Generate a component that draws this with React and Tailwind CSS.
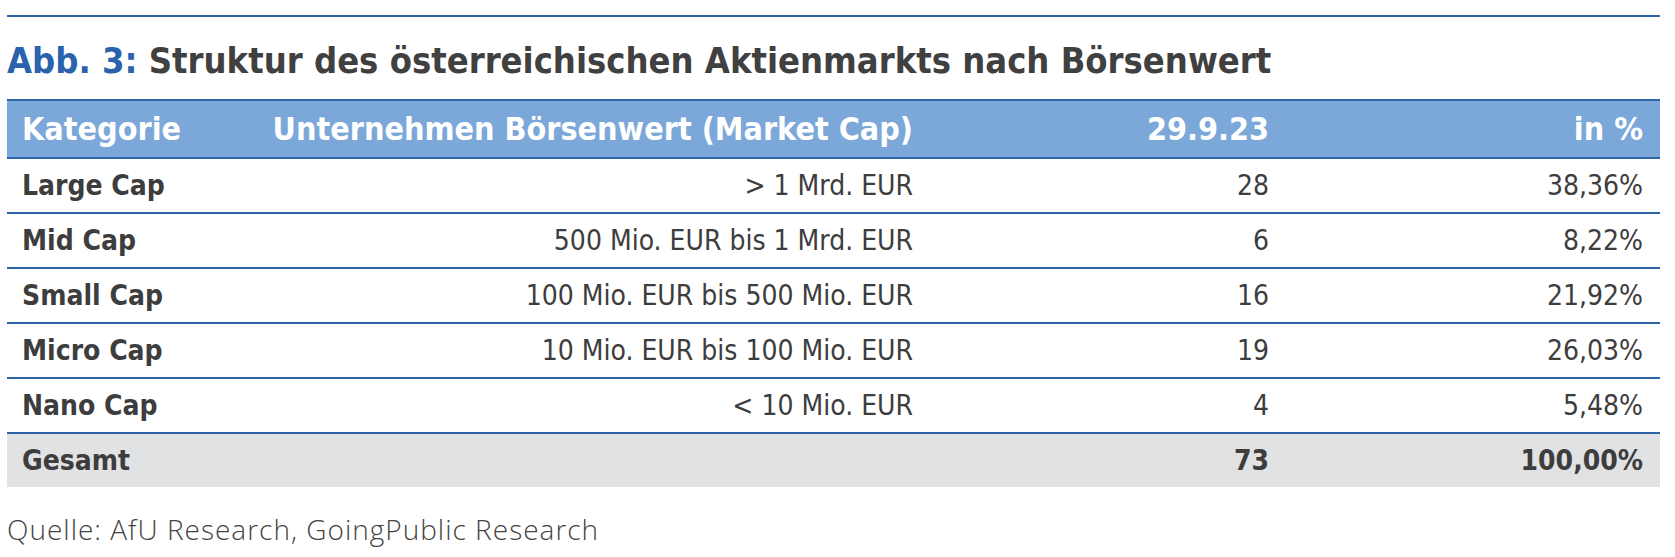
import React from "react";

const rows = [
  { cat: "Large Cap", range: "> 1 Mrd. EUR", count: "28", pct: "38,36%" },
  { cat: "Mid Cap", range: "500 Mio. EUR bis 1 Mrd. EUR", count: "6", pct: "8,22%" },
  { cat: "Small Cap", range: "100 Mio. EUR bis 500 Mio. EUR", count: "16", pct: "21,92%" },
  { cat: "Micro Cap", range: "10 Mio. EUR bis 100 Mio. EUR", count: "19", pct: "26,03%" },
  { cat: "Nano Cap", range: "< 10 Mio. EUR", count: "4", pct: "5,48%" },
];

const cond = { fontFamily: '"Liberation Sans Narrow", "DejaVu Sans Condensed", "Open Sans", sans-serif' };

export default function App() {
  return (
    <div className="w-[1675px] h-[557px] bg-white pl-[7px] pr-[15px] pt-[15px] text-[#3d3d3d]" style={cond}>
      <div className="h-[2px] bg-[#2d64a6]" />

      <h1 className="mt-[22px] h-[60px] text-[36px] font-bold leading-[44px] text-[#404040] font-stretch-condensed">
        <span className="text-[#2a62ab]">Abb. 3:</span> Struktur des österreichischen Aktienmarkts nach Börsenwert
      </h1>

      {/* table */}
      <div className="w-[1653px] font-stretch-condensed">
        <div className="grid h-[60px] grid-cols-[240px_683px_356px_374px] items-center border-y-2 border-[#2d64a6] bg-[#7ba7d9] text-[32px] font-bold text-white">
          <div className="pl-[15px]">Kategorie</div>
          <div className="pr-[17px] text-right">Unternehmen Börsenwert (Market Cap)</div>
          <div className="pr-[17px] text-right">29.9.23</div>
          <div className="pr-[17px] text-right">in %</div>
        </div>

        {rows.map((r) => (
          <div key={r.cat} className="grid h-[55px] grid-cols-[240px_683px_356px_374px] items-center border-b-2 border-[#2d64a6] text-[28px]">
            <div className="pl-[15px] font-bold">{r.cat}</div>
            <div className="pr-[17px] text-right font-light">{r.range}</div>
            <div className="pr-[17px] text-right font-light">{r.count}</div>
            <div className="pr-[17px] text-right font-light">{r.pct}</div>
          </div>
        ))}

        <div className="grid h-[53px] grid-cols-[240px_683px_356px_374px] items-center bg-[#e1e2e4] text-[28px] font-bold">
          <div className="pl-[15px]">Gesamt</div>
          <div />
          <div className="pr-[17px] text-right">73</div>
          <div className="pr-[17px] text-right">100,00%</div>
        </div>
      </div>

      <p className="mt-[24px] text-[28px] leading-[36px] tracking-[1px] font-light text-[#444]" style={{ fontFamily: '"Open Sans", "Liberation Sans", sans-serif' }}>
        Quelle: AfU Research, GoingPublic Research
      </p>
    </div>
  );
}
